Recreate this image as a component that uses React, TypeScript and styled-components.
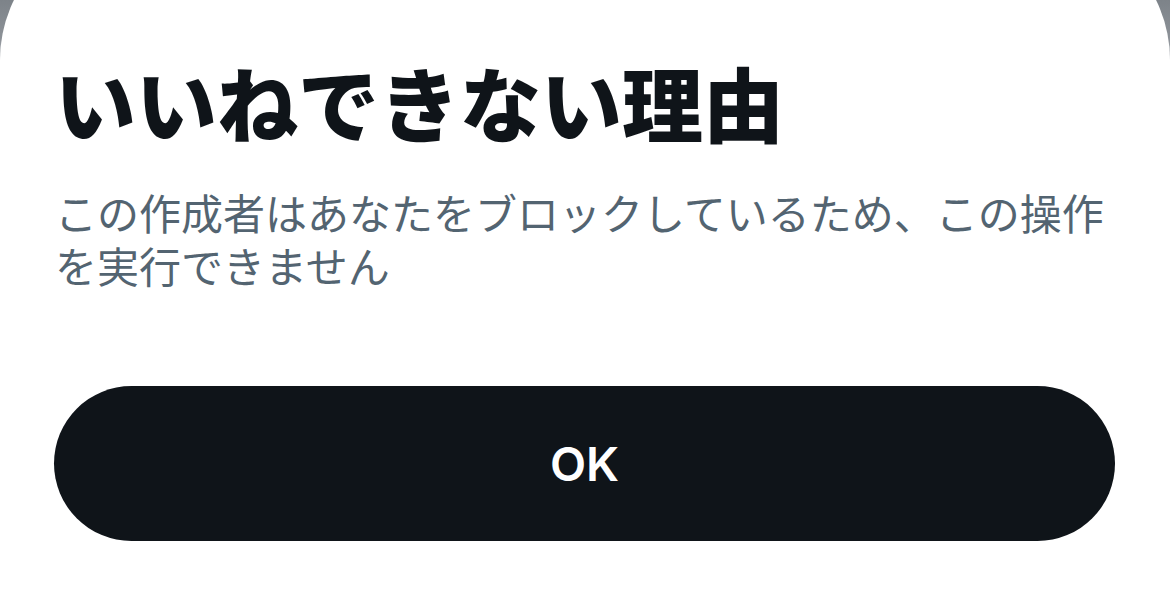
import React from 'react';
import styled, { createGlobalStyle } from 'styled-components';

const GlobalStyle = createGlobalStyle`
  html, body {
    margin: 0;
    padding: 0;
  }
  body {
    width: 1170px;
    height: 591px;
    overflow: hidden;
    background: linear-gradient(180deg, #7d8389 0px, #8d9298 40px, #c9ccd0 70px, #ffffff 95px);
    font-family: Inter, "Noto Sans CJK JP", sans-serif;
  }
`;

const Sheet = styled.div`
  margin-top: -76px;
  height: 667px;
  background: #ffffff;
  border-radius: 136px 136px 0 0;
  padding: 130px 55px 0 54px;
  box-sizing: border-box;
  display: flex;
  flex-direction: column;
`;

const Title = styled.h1`
  margin: 0 0 0 1px;
  font-family: "Noto Sans CJK JP", sans-serif;
  font-weight: 900;
  font-size: 81px;
  line-height: 94px;
  color: #0f1419;
`;

const Message = styled.p`
  margin: 37px 0 0 1px;
  font-family: "Noto Sans CJK JP", sans-serif;
  font-weight: 400;
  font-size: 42px;
  line-height: 53px;
  color: #536471;
`;

const Button = styled.button`
  margin-top: 95px;
  height: 155px;
  width: 100%;
  flex-shrink: 0;
  border: none;
  border-radius: 78px;
  background: #0f1419;
  color: #ffffff;
  font-family: Inter, "Liberation Sans", sans-serif;
  font-weight: 600;
  font-size: 47px;
  display: flex;
  align-items: center;
  justify-content: center;
  cursor: pointer;
`;

export default function App() {
  return (
    <>
      <GlobalStyle />
      <Sheet>
        <Title>いいねできない理由</Title>
        <Message>
          この作成者はあなたをブロックしているため、この操作を実行できません
        </Message>
        <Button>OK</Button>
      </Sheet>
    </>
  );
}
